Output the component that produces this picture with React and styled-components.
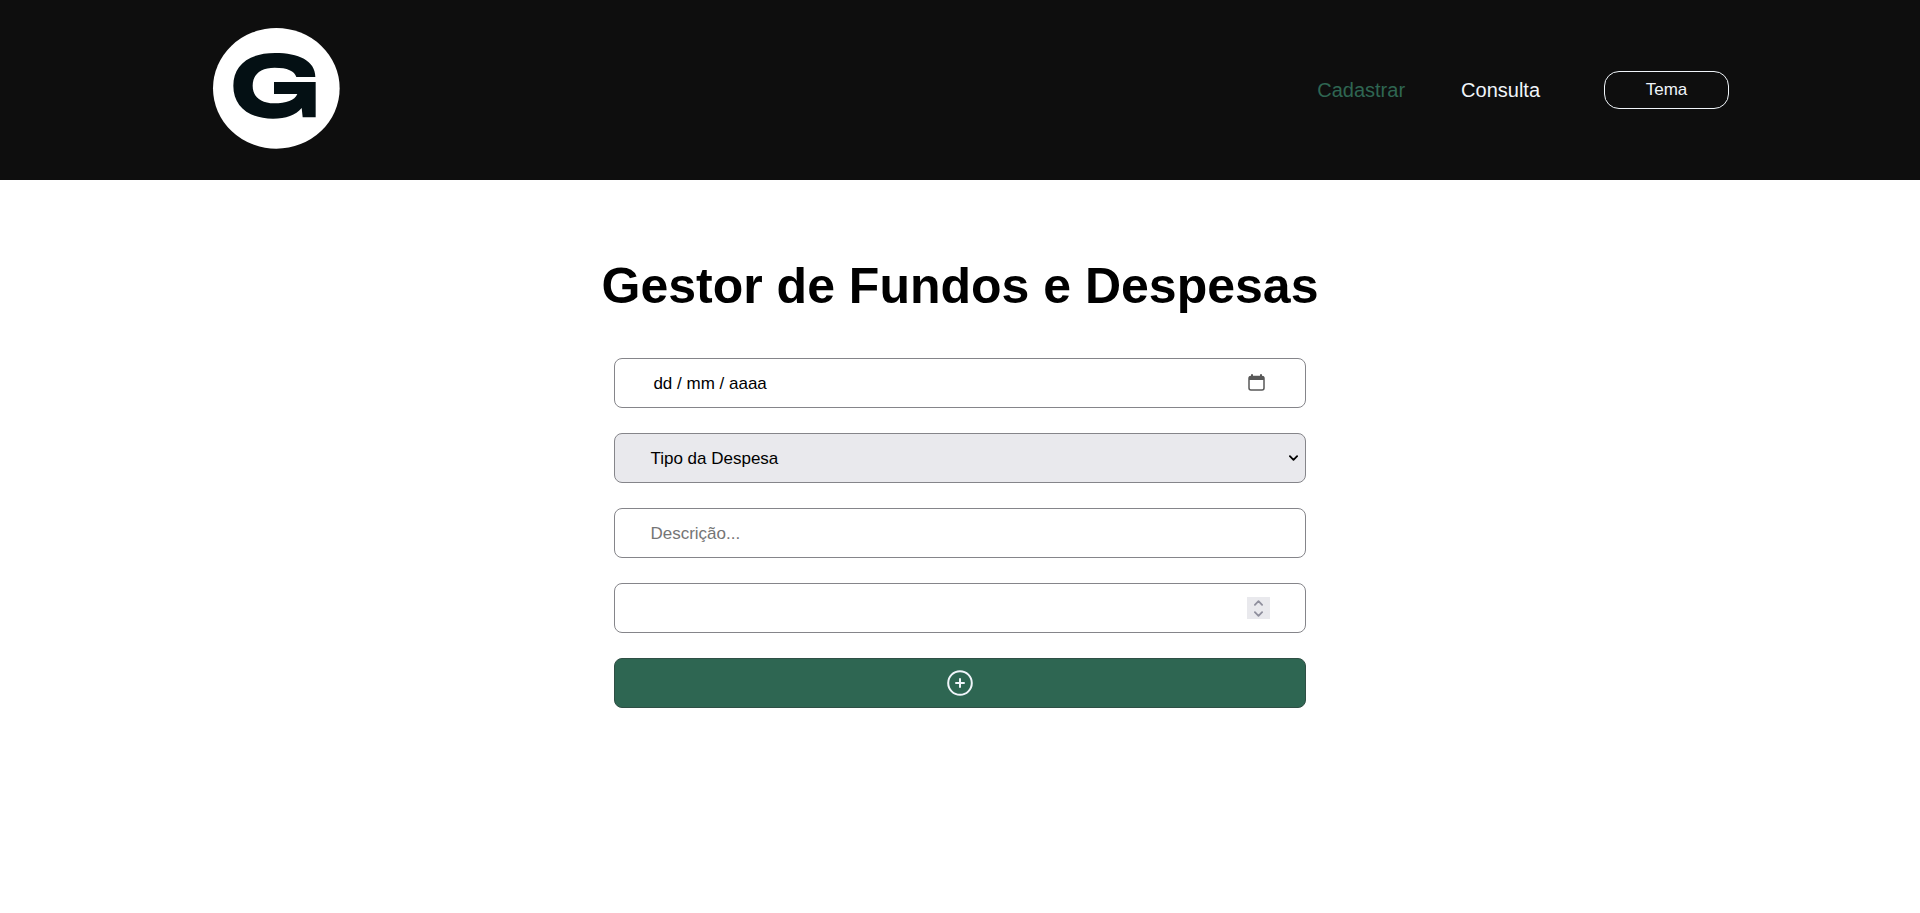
import React, { useState } from "react";
import styled, { createGlobalStyle, css } from "styled-components";

const GlobalStyle = createGlobalStyle`
  * { box-sizing: border-box; margin: 0; padding: 0; }
  body {
    background: #ffffff;
    color: #000000;
    font-family: "Liberation Sans", Arial, sans-serif;
  }
`;

const Header = styled.header`
  display: flex;
  align-items: center;
  justify-content: space-between;
  min-height: 180px;
  padding: 0 191px 0 11%;
  padding-right: calc(10% - 1px);
  background: #0e0e0e;
`;

const LogoLink = styled.a`
  display: flex;
`;

const Nav = styled.nav`
  display: flex;
  align-items: center;
  gap: 56px;
`;

const NavLink = styled.a`
  color: ${(p) => (p.$active ? "#2e6652" : "#f0f5fa")};
  font-size: 20px;
  line-height: 24px;
  text-decoration: none;
`;

const ThemeButton = styled.button`
  width: 125px;
  height: 38px;
  margin-left: 8px;
  border: 1px solid #f0f5fa;
  border-radius: 15px;
  background: transparent;
  color: #f0f5fa;
  font-family: inherit;
  font-size: 17px;
  cursor: pointer;
`;

const Main = styled.main`
  display: flex;
  flex-direction: column;
  align-items: center;
  gap: 43px;
  padding: 77px 16px;
`;

const Title = styled.h1`
  font-size: 50px;
  line-height: 58px;
  text-align: center;
`;

const Form = styled.form`
  display: flex;
  flex-direction: column;
  gap: 25px;
  width: 36vw;
  min-width: 300px;
`;

const frame = css`
  width: 100%;
  height: 50px;
  border: 1px solid #85858a;
  border-radius: 8px;
`;

const Field = styled.div`
  ${frame}
  display: flex;
  align-items: center;
  padding: 0 35px;
  background: #ffffff;
`;

const Input = styled.input`
  flex: 1;
  min-width: 0;
  height: 100%;
  padding-top: 2px;
  padding-left: ${(p) => (p.$inset ? "3px" : "0")};
  border: 0;
  outline: 0;
  background: transparent;
  color: #000000;
  font-family: inherit;
  font-size: 17px;
  appearance: textfield;

  &::placeholder {
    color: ${(p) => (p.$inset ? "#000000" : "#757575")};
    opacity: 1;
  }
  &::-webkit-inner-spin-button {
    appearance: none;
  }
`;

const SelectBox = styled.div`
  display: grid;
  align-items: center;

  & > * { grid-area: 1 / 1; }
  & > svg {
    justify-self: end;
    margin-right: 8px;
    pointer-events: none;
  }
`;

const Select = styled.select`
  ${frame}
  padding: 0 35px;
  appearance: none;
  background: #e9e9ed;
  color: #000000;
  font-family: inherit;
  font-size: 17px;
`;

const CalendarButton = styled.button`
  display: flex;
  margin-right: 5px;
  padding-bottom: 2px;
  border: 0;
  background: transparent;
  cursor: pointer;
`;

const Spinner = styled.div`
  display: flex;
  flex-direction: column;
  width: 23px;
  background: #e9e9ed;
`;

const StepButton = styled.button`
  display: flex;
  align-items: center;
  justify-content: center;
  height: 11px;
  border: 0;
  background: transparent;
  color: #8f8f9d;
`;

const SubmitButton = styled.button`
  ${frame}
  display: flex;
  align-items: center;
  justify-content: center;
  border-color: #2f4f45;
  background: #2e6652;
  color: #f0f5fa;
  cursor: pointer;
`;

function Logo() {
  return (
    <svg width="130" height="124" viewBox="33 39 390 372" aria-hidden="true">
      <ellipse cx="229" cy="220" rx="190" ry="181" fill="#ffffff" />
      <path
        fill="#041014"
        d="M346 186C346 137 295 114 226 114C145 114 100 151 100 212C100 273 145 311 219 311C258 311 287 301 305 279L308 307H347V201H222V237H292C284 256 259 265 222 265C182 265 158 245 158 212C158 178 182 158 224 158C262 158 284 168 289 186Z"
      />
    </svg>
  );
}

function Chevron({ up }) {
  return (
    <svg width="9" height="6" viewBox="0 0 10 6" fill="none" stroke="currentColor" strokeWidth="2" strokeLinecap="round" strokeLinejoin="round" aria-hidden="true">
      <path d={up ? "M1 5L5 1L9 5" : "M1 1L5 5L9 1"} />
    </svg>
  );
}

function CalendarIcon() {
  return (
    <svg width="17" height="17" viewBox="0 0 17 17" aria-hidden="true">
      <path d="M4 1V3M13 1V3" stroke="#585858" strokeWidth="2" strokeLinecap="round" />
      <rect x="1" y="2.5" width="15" height="13.5" rx="2" fill="none" stroke="#585858" strokeWidth="1.5" />
      <path d="M1 6V4Q1 2 3 2H14Q16 2 16 4V6Z" fill="#585858" />
    </svg>
  );
}

function PlusCircle() {
  return (
    <svg width="26" height="26" viewBox="0 0 26 26" fill="none" stroke="currentColor" strokeWidth="2" strokeLinecap="round" aria-hidden="true">
      <circle cx="13" cy="13" r="11.8" />
      <path d="M13 9V17M9 13H17" />
    </svg>
  );
}

export default function App() {
  const [amount, setAmount] = useState("");
  const step = (delta) => setAmount(String(Number(amount) + delta));

  return (
    <>
      <GlobalStyle />
      <Header>
        <LogoLink href="#" aria-label="Início">
          <Logo />
        </LogoLink>
        <Nav>
          <NavLink href="#cadastrar" $active>Cadastrar</NavLink>
          <NavLink href="#consulta">Consulta</NavLink>
          <ThemeButton type="button">Tema</ThemeButton>
        </Nav>
      </Header>
      <Main>
        <Title>Gestor de Fundos e Despesas</Title>
        <Form onSubmit={(e) => e.preventDefault()}>
          <Field>
            <Input $inset type="text" inputMode="numeric" placeholder="dd / mm / aaaa" aria-label="Data" />
            <CalendarButton type="button" aria-label="Abrir calendário">
              <CalendarIcon />
            </CalendarButton>
          </Field>
          <SelectBox>
            <Select aria-label="Tipo da Despesa" defaultValue="">
              <option value="">Tipo da Despesa</option>
            </Select>
            <Chevron />
          </SelectBox>
          <Field>
            <Input type="text" placeholder="Descrição..." aria-label="Descrição" />
          </Field>
          <Field>
            <Input type="number" aria-label="Valor" value={amount} onChange={(e) => setAmount(e.target.value)} />
            <Spinner>
              <StepButton type="button" aria-label="Aumentar" onClick={() => step(1)}><Chevron up /></StepButton>
              <StepButton type="button" aria-label="Diminuir" onClick={() => step(-1)}><Chevron /></StepButton>
            </Spinner>
          </Field>
          <SubmitButton type="submit" aria-label="Adicionar">
            <PlusCircle />
          </SubmitButton>
        </Form>
      </Main>
    </>
  );
}
